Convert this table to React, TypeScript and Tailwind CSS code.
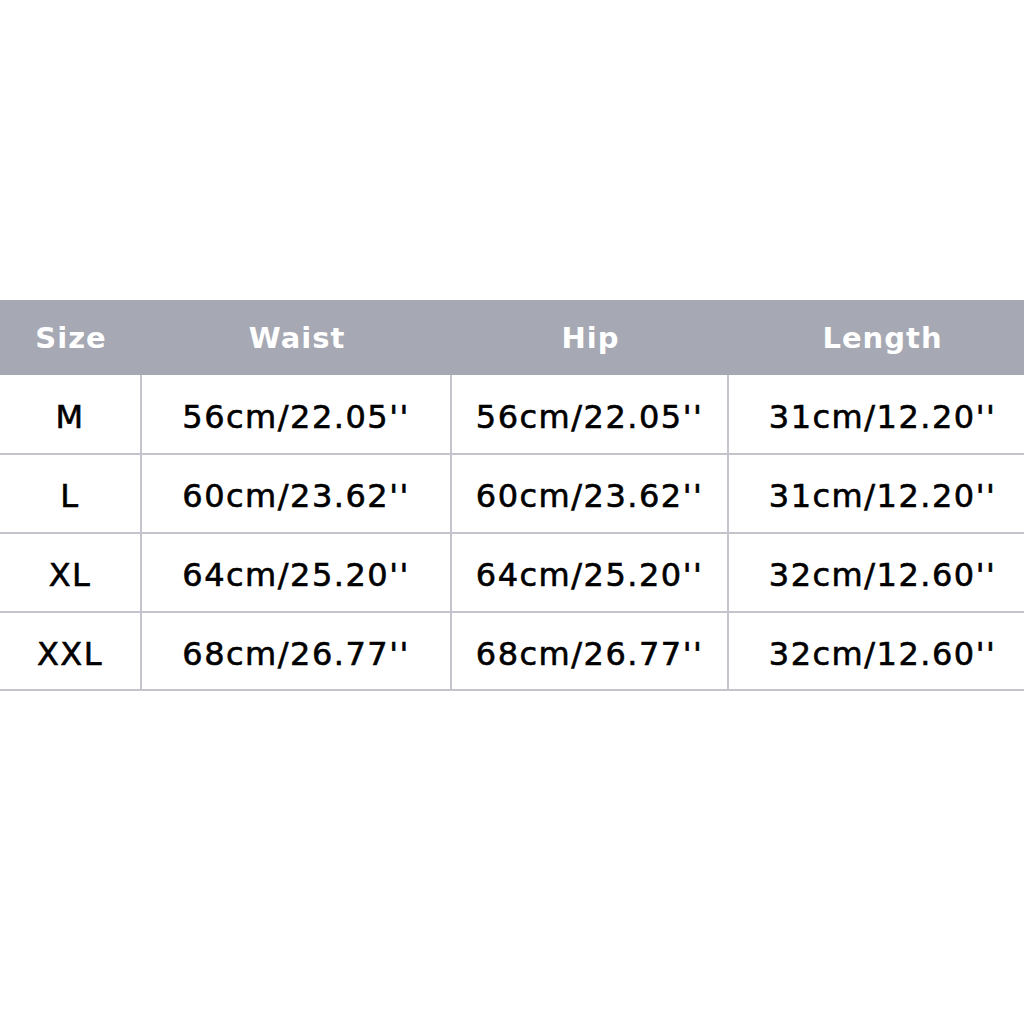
const headers = ["Size", "Waist", "Hip", "Length"];

const rows = [
  { h: "h-[80px]", cells: ["M", "56cm/22.05''", "56cm/22.05''", "31cm/12.20''"] },
  { h: "h-[79px]", cells: ["L", "60cm/23.62''", "60cm/23.62''", "31cm/12.20''"] },
  { h: "h-[79px]", cells: ["XL", "64cm/25.20''", "64cm/25.20''", "32cm/12.60''"] },
  { h: "h-[78px]", cells: ["XXL", "68cm/26.77''", "68cm/26.77''", "32cm/12.60''"] },
];

export default function App() {
  return (
    <div className="w-[1024px] h-[1024px] bg-white pt-[300px] font-['DejaVu_Sans',sans-serif]">
      {/* header */}
      <div className="grid grid-cols-[142px_310px_277px_295px] h-[75px] bg-[#a6a9b3]">
        {headers.map((h, j) => (
          <div
            key={h}
            className={
              "flex items-center justify-center text-white text-[29px] font-bold tracking-[1px] pt-[2px] " +
              (j === 3 ? "pl-[12px]" : "")
            }
          >
            {h}
          </div>
        ))}
      </div>

      {/* body */}
      {rows.map((r, i) => (
        <div
          key={i}
          className={
            "grid grid-cols-[142px_310px_277px_295px] border-b-2 border-[#c4c4cc] " + r.h
          }
        >
          {r.cells.map((c, j) => (
            <div
              key={j}
              className={
                "flex items-center justify-center text-[32px] text-black tracking-[1.5px] pt-[5px] [-webkit-text-stroke:0.6px_black] " +
                (j < 3 ? "border-r-2 border-[#c4c4cc]" : "pl-[12px]")
              }
            >
              {c}
            </div>
          ))}
        </div>
      ))}
    </div>
  );
}
